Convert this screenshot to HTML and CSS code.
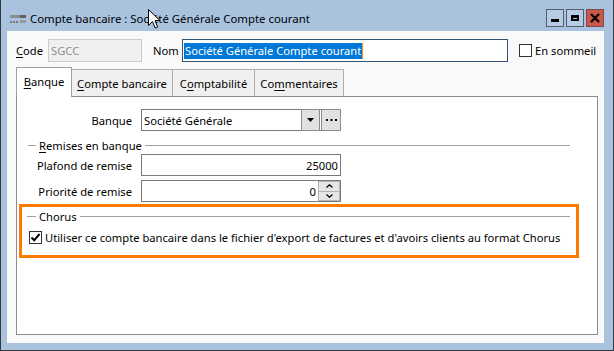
FILE: index.html
```html
<!DOCTYPE html>
<html lang="fr">
<head>
    <meta charset="UTF-8">
    <title>Compte bancaire</title>
    <link rel="stylesheet" href="styles.css">
</head>
<body>
    <div class="window">
        <div class="titlebar">
            <svg class="app-icon" width="16" height="9" viewBox="0 0 16 9">
                <rect x="0" y="0" width="10" height="3" fill="#8c8c8c"/>
                <rect x="10" y="0" width="6" height="3" fill="#5f5f5f"/>
                <rect x="0" y="6" width="2" height="2" fill="#7a7a7a"/>
                <rect x="3" y="6" width="2" height="2" fill="#7a7a7a"/>
                <rect x="6" y="6" width="2" height="2" fill="#7a7a7a"/>
                <rect x="10" y="5" width="6" height="3" fill="#9a9a9a"/>
            </svg>
            <span class="title">Compte bancaire : Société Générale Compte courant</span>
            <div class="caption-buttons">
                <span class="cap-btn"><span class="min-bar"></span></span>
                <span class="cap-btn"><span class="max-box"></span></span>
                <span class="cap-btn close">
                    <svg width="10" height="10" viewBox="0 0 10 10">
                        <path d="M1 1 L9 9 M9 1 L1 9" stroke="#000" stroke-width="2.2"/>
                    </svg>
                </span>
            </div>
        </div>

        <div class="client">
            <div class="top-row">
                <span class="lbl code-lbl"><u>C</u>ode</span>
                <div class="field disabled code-field">SGCC</div>
                <span class="lbl nom-lbl">Nom</span>
                <div class="field focused nom-field"><span class="sel">Société Générale Compte courant</span><span class="caret"></span></div>
                <div class="check sommeil"><span class="box"></span>En sommeil</div>
            </div>

            <div class="tabs">
                <div class="tab active w-banque"><u>B</u>anque</div>
                <div class="tab w-compte"><u>C</u>ompte bancaire</div>
                <div class="tab w-compta">C<u>o</u>mptabilité</div>
                <div class="tab w-comment">Co<u>m</u>mentaires</div>
            </div>

            <div class="panel">
                <div class="form-row first">
                    <span class="row-lbl">Banque</span>
                    <div class="combo">
                        <span class="combo-text">Société Générale</span>
                        <span class="combo-btn">
                            <svg width="7" height="4" viewBox="0 0 7 4"><path d="M0 0 H7 L3.5 4 Z" fill="#000"/></svg>
                        </span>
                        <span class="combo-btn dots">
                            <svg width="11" height="2" viewBox="0 0 11 2">
                                <rect x="0" y="0" width="2" height="2" fill="#000"/>
                                <rect x="4.5" y="0" width="2" height="2" fill="#000"/>
                                <rect x="9" y="0" width="2" height="2" fill="#000"/>
                            </svg>
                        </span>
                    </div>
                </div>

                <div class="group-title remises"><span><u>R</u>emises en banque</span></div>

                <div class="form-row plafond">
                    <span class="row-lbl">Plafond de remise</span>
                    <div class="num-field">25000</div>
                </div>

                <div class="form-row priorite">
                    <span class="row-lbl">Priorité de remise</span>
                    <div class="num-field spin-field">
                        <span class="num-val">0</span>
                        <span class="spin">
                            <span class="spin-btn">
                                <svg width="7" height="4" viewBox="0 0 7 4"><path d="M0.5 3.5 L3.5 0.8 L6.5 3.5" fill="none" stroke="#000" stroke-width="1.2"/></svg>
                            </span>
                            <span class="spin-btn">
                                <svg width="7" height="4" viewBox="0 0 7 4"><path d="M0.5 0.5 L3.5 3.2 L6.5 0.5" fill="none" stroke="#000" stroke-width="1.2"/></svg>
                            </span>
                        </span>
                    </div>
                </div>

                <div class="highlight">
                    <div class="group-title chorus"><span>Chorus</span></div>
                    <div class="check chorus-check">
                        <span class="box">
                            <svg width="11" height="11" viewBox="0 0 11 11"><path d="M1.5 5.5 L4.2 8.3 L9.5 2" fill="none" stroke="#000" stroke-width="2"/></svg>
                        </span>
                        Utiliser ce compte bancaire dans le fichier d'export de factures et d'avoirs clients au format Chorus
                    </div>
                </div>
            </div>
        </div>

        <svg class="cursor" width="13" height="21" viewBox="0 0 13 21">
            <path d="M0.5 0.5 L0.5 16.5 L4.5 12.5 L7.2 19 L9.6 18 L7 11.6 L12 11.6 Z" fill="#fff" stroke="#000" stroke-width="1"/>
        </svg>
    </div>
</body>
</html>
```

FILE: styles.css
```css
body {
    margin: 0;
    font-family: "Noto Sans", "Open Sans", sans-serif;
    font-size: 11.2px;
    color: #000;
}
u {
    text-decoration-thickness: 1px;
    text-underline-offset: 2px;
}
.window {
    position: relative;
    width: 614px;
    height: 351px;
    box-sizing: border-box;
    background: #a9c3df;
    border: 1px solid #34383c;
    border-top: none;
    padding: 0 9px 7px 6px;
    display: flex;
    flex-direction: column;
}
.titlebar {
    height: 31px;
    flex: none;
    display: flex;
    align-items: flex-start;
    padding-left: 3px;
}
.app-icon {
    margin-top: 15px;
}
.title {
    margin-left: 4px;
    margin-top: 11px;
    font-size: 11.4px;
    line-height: 16px;
}
.caption-buttons {
    margin-left: auto;
    margin-top: 9px;
    display: flex;
    gap: 2px;
}
.cap-btn {
    width: 18px;
    height: 18px;
    box-sizing: border-box;
    border: 1px solid #4f5d6e;
    background: #b7cbe3;
    display: flex;
    align-items: center;
    justify-content: center;
}
.cap-btn.close {
    background: #c9584a;
    border-color: #7d4a48;
}
.min-bar {
    width: 8px;
    height: 3px;
    background: #000;
    margin-top: 5px;
}
.max-box {
    width: 8px;
    height: 6px;
    box-sizing: border-box;
    border: 2px solid #000;
    border-top-width: 3px;
}
.client {
    flex: 1;
    background: #f9f9f9;
    padding: 8px 6px 8px 9px;
    display: flex;
    flex-direction: column;
    min-height: 0;
}
.top-row {
    display: flex;
    align-items: center;
    height: 23px;
}
.lbl {
    white-space: nowrap;
}
.code-lbl {
    width: 32px;
}
.field {
    height: 23px;
    box-sizing: border-box;
    border: 1px solid #7a7a7a;
    background: #fff;
    display: flex;
    align-items: center;
    padding-left: 2px;
    white-space: nowrap;
}
.field.disabled {
    background: #f0f0f0;
    border-color: #cccccc;
    color: #8d8d8d;
}
.code-field {
    width: 94px;
}
.nom-lbl {
    margin-left: 11px;
    width: 29px;
}
.nom-field {
    width: 326px;
    border-color: #2e5578;
    padding-left: 1px;
}
.sel {
    background: #0078d7;
    color: #fff;
    line-height: 16px;
    padding: 0 1px;
}
.caret {
    width: 1px;
    height: 16px;
    background: #ff8c1a;
}
.check {
    display: flex;
    align-items: center;
    white-space: nowrap;
}
.box {
    width: 13px;
    height: 13px;
    box-sizing: border-box;
    border: 1px solid #333;
    background: #fff;
    margin-right: 3px;
    display: flex;
    align-items: center;
    justify-content: center;
    flex: none;
}
.sommeil {
    margin-left: 11px;
}
.tabs {
    margin-top: 5px;
    height: 29px;
    display: flex;
    align-items: flex-end;
    flex: none;
}
.tab {
    height: 27px;
    box-sizing: border-box;
    border-top: 1px solid #adadad;
    border-right: 1px solid #adadad;
    background: #f0f0f0;
    display: flex;
    align-items: center;
    justify-content: center;
    white-space: nowrap;
    padding-top: 1px;
}
.tab.active {
    height: 30px;
    margin-bottom: -1px;
    background: #fff;
    border-left: 1px solid #adadad;
    border-color: #a0a0a0;
    position: relative;
    padding-bottom: 3px;
}
.w-banque { width: 56px; }
.w-compte { width: 101px; }
.w-compta { width: 82px; }
.w-comment { width: 89px; }
.panel {
    flex: 1;
    background: #fff;
    border: 1px solid #898c95;
    display: flex;
    flex-direction: column;
}
.form-row {
    display: grid;
    grid-template-columns: 115px 200px;
    column-gap: 9px;
    align-items: center;
    height: 22px;
}
.form-row.first {
    margin-top: 12px;
}
.row-lbl {
    text-align: right;
    white-space: nowrap;
}
.combo {
    height: 22px;
    box-sizing: border-box;
    border: 1px solid #7a7a7a;
    display: flex;
    align-items: stretch;
}
.combo-text {
    flex: 1;
    padding-left: 2px;
    display: flex;
    align-items: center;
}
.combo-btn {
    width: 19px;
    box-sizing: border-box;
    border: 1px solid #8c8c8c;
    background: #e1e1e1;
    margin: -1px 1px -1px 0;
    display: flex;
    align-items: center;
    justify-content: center;
}
.combo-btn.dots {
    width: 20px;
    margin-right: -1px;
}
.group-title {
    display: flex;
    align-items: center;
    height: 16px;
    white-space: nowrap;
}
.group-title::before {
    content: "";
    width: 8px;
    border-top: 1px solid #a0a0a0;
}
.group-title::after {
    content: "";
    flex: 1;
    border-top: 1px solid #a0a0a0;
}
.group-title span {
    margin: 0 3px;
}
.remises {
    margin: 6px 27px 0 11px;
}
.plafond {
    margin-top: 1px;
}
.priorite {
    margin-top: 4px;
}
.num-field {
    height: 22px;
    box-sizing: border-box;
    border: 1px solid #7a7a7a;
    display: flex;
    align-items: center;
    justify-content: flex-end;
    padding-right: 2px;
}
.spin-field {
    padding-right: 0;
}
.num-val {
    margin-right: 2px;
}
.spin {
    width: 22px;
    height: 20px;
    display: flex;
    flex-direction: column;
}
.spin-btn {
    flex: 1;
    background: #e6e6e6;
    border: 1px solid #b4b4b4;
    display: flex;
    align-items: center;
    justify-content: center;
}
.spin-btn + .spin-btn {
    border-top: none;
}
.highlight {
    margin: 2px 18px 0 2px;
    height: 54px;
    box-sizing: border-box;
    border: 3px solid #ff7b00;
}
.chorus {
    margin: 1px 6px 0 5px;
}
.chorus::before {
    width: 9px;
}
.chorus-check {
    margin: 5px 0 0 7px;
    height: 16px;
}
.cursor {
    position: absolute;
    left: 147px;
    top: 9px;
}
```
